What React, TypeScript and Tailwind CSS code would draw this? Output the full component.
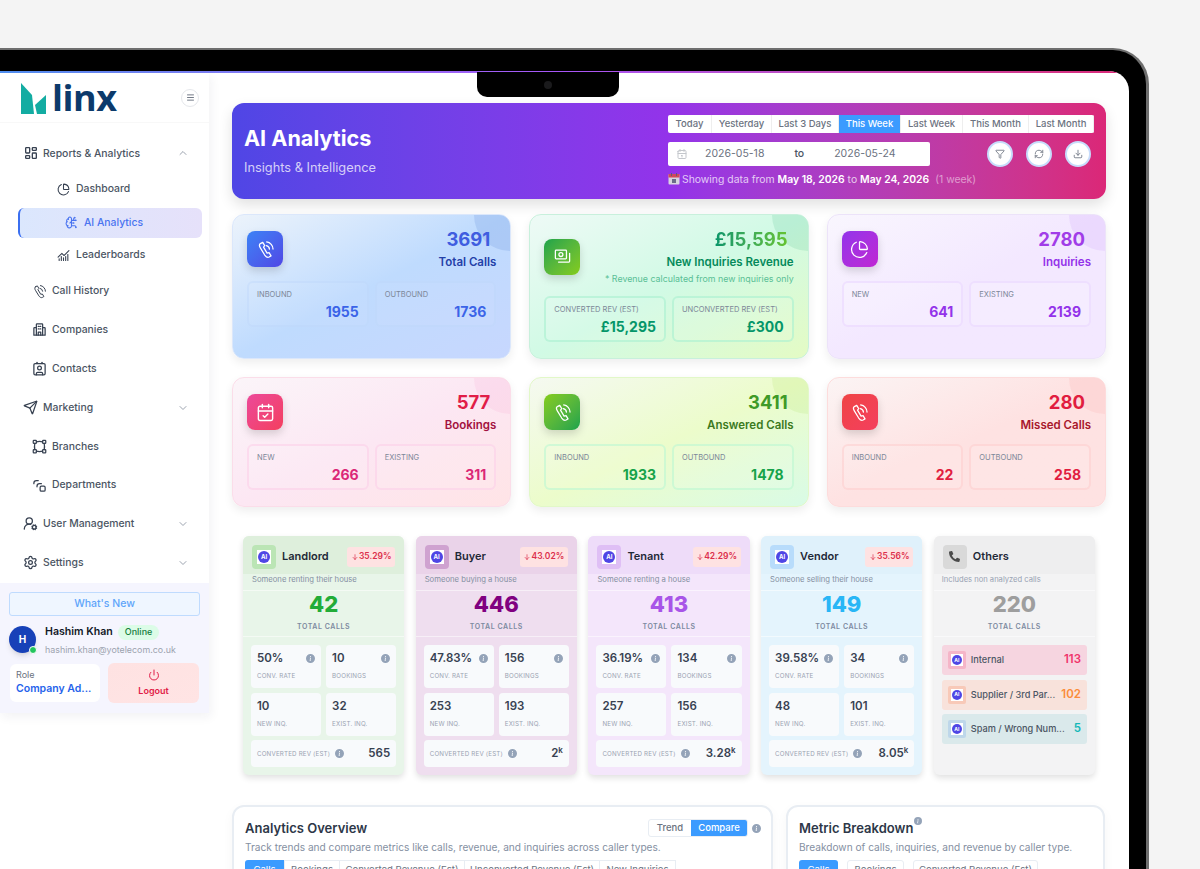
import {
  BrainCircuit,
  CalendarCheck,
  ChartNoAxesCombined,
  ChartPie,
  ChevronDown,
  ChevronUp,
  Contact,
  Download,
  Funnel,
  Menu,
  Power,
  RefreshCw,
  Send,
  Settings,
  UserRoundCog,
  VectorSquare,
} from "lucide-react";
import { BsInfoCircleFill } from "react-icons/bs";
import { FaPhoneAlt } from "react-icons/fa";
import { TbArrowDown, TbCalendar, TbLayoutDashboard } from "react-icons/tb";

const PhoneWaves = ({ className }: { className: string }) => (
  <svg viewBox="0 0 24 24" className={className} fill="none" stroke="currentColor" strokeWidth="1.6" strokeLinecap="round" strokeLinejoin="round">
    <path d="M5.5 4.5 L8.5 3 L11 7 L9.5 9 L14 16.5 L16.5 16 L19 20 L16.5 21.5 C14.5 22.5 12.5 21 11 19 L5.5 10 C4.3 8 4 5.5 5.5 4.5 Z" />
    <path d="M13.5 2.5 a9 9 0 0 1 8 9" />
    <path d="M13 7 a5 5 0 0 1 4 4.5" />
  </svg>
);

const CashIcon = ({ className }: { className: string }) => (
  <svg viewBox="0 0 24 24" className={className} fill="none" stroke="currentColor" strokeWidth="1.6" strokeLinecap="round" strokeLinejoin="round">
    <rect x="3" y="4" width="14" height="11" rx="1" />
    <circle cx="10" cy="9.5" r="2.5" />
    <path d="M7 19 h13 a1 1 0 0 0 1 -1 V8" />
  </svg>
);

const CompaniesIcon = ({ className }: { className: string }) => (
  <svg viewBox="0 0 24 24" className={className} fill="none" stroke="currentColor" strokeWidth="2" strokeLinecap="round" strokeLinejoin="round">
    <rect x="7" y="3" width="10" height="18" rx="1" />
    <path d="M7 9H4a1 1 0 0 0 -1 1v11h4 M17 9h3a1 1 0 0 1 1 1v11h-4" />
    <path d="M10 7h1 M13 7h1 M10 11h1 M13 11h1 M10 21v-5h4v5" />
  </svg>
);

const DepartmentsIcon = ({ className }: { className: string }) => (
  <svg viewBox="0 0 24 24" className={className} fill="none" stroke="currentColor" strokeWidth="2" strokeLinecap="round" strokeLinejoin="round">
    <path d="M10 4H7a4 4 0 0 0 -4 4v1" />
    <path d="M15 9h-3a4 4 0 0 0 -4 4v1" />
    <rect x="13" y="13" width="8" height="8" rx="2" />
  </svg>
);

const navIcon = "h-[15px] w-[15px] shrink-0";

const NavRow = ({ icon, label, indent, chevron }: { icon: React.ReactNode; label: string; indent: string; chevron?: "up" | "down" }) => (
  <div className={`flex h-[38.8px] items-center text-[10.4px] font-medium text-[#4b5563] ${indent}`}>
    <span className="mr-[6px] flex w-[13px] justify-center text-[#374151]">{icon}</span>
    <span>{label}</span>
    {chevron === "up" && <ChevronUp className="ml-auto mr-[20px] h-[12px] w-[12px] text-[#9ca3af]" />}
    {chevron === "down" && <ChevronDown className="ml-auto mr-[20px] h-[12px] w-[12px] text-[#9ca3af]" />}
  </div>
);

const Sidebar = () => (
  <aside className="w-[209px] shrink-0 self-start bg-white shadow-[2px_4px_10px_rgba(30,30,60,0.06)]">
    <div className="flex h-[50px] items-center justify-between border-b border-[#f8f8f8] pl-[21px] pr-[10px]">
      <div className="flex items-center">
        <svg width="26" height="31" viewBox="0 0 26 31" className="mt-[1px]">
          <path d="M0 0 L11 12 L13 31 L0 31 Z" fill="#13aca2" />
          <path d="M25 12 L25 31 L16 31 L14 22 Z" fill="#13aca2" />
        </svg>
        <span className="ml-[5px] font-['Open_Sans'] text-[36px] font-bold leading-[50px] tracking-[-0.5px] text-[#0c3a6b]">linx</span>
      </div>
      <div className="flex h-[18px] w-[18px] items-center justify-center rounded-full border border-[#e5e7eb] text-[#6b7280]">
        <Menu className="h-[9px] w-[9px]" strokeWidth={2.5} />
      </div>
    </div>
    <nav className="pb-[1px] pt-[11px]">
      <NavRow icon={<TbLayoutDashboard className="h-[16px] w-[16px] shrink-0" />} label="Reports & Analytics" indent="pl-[24px]" chevron="up" />
      <div className="flex h-[33px] items-center pl-[57px] text-[10.4px] font-medium text-[#4b5563]">
        <ChartPie className="mr-[6px] h-[13px] w-[13px] text-[#374151]" />
        Dashboard
      </div>
      <div className="ml-[18px] mr-[7px] mt-[2px] flex h-[30px] items-center rounded-[6px] border-l-2 border-[#3b6ff0] bg-gradient-to-r from-[#dbe7fd] to-[#e6e1fa] pl-[45px] text-[10.4px] font-medium text-[#4a74f0]">
        <BrainCircuit className="mr-[6px] h-[13px] w-[13px]" />
        AI Analytics
      </div>
      <div className="mb-[-1px] flex h-[35px] items-center pl-[57px] text-[10.4px] font-medium text-[#4b5563]">
        <ChartNoAxesCombined className="mr-[6px] h-[13px] w-[13px] text-[#374151]" />
        Leaderboards
      </div>
      <NavRow icon={<PhoneWaves className={navIcon} />} label="Call History" indent="pl-[33px]" />
      <NavRow icon={<CompaniesIcon className={navIcon} />} label="Companies" indent="pl-[33px]" />
      <NavRow icon={<Contact className={navIcon} />} label="Contacts" indent="pl-[33px]" />
      <NavRow icon={<Send className={navIcon} />} label="Marketing" indent="pl-[24px]" chevron="down" />
      <NavRow icon={<VectorSquare className={navIcon} />} label="Branches" indent="pl-[33px]" />
      <NavRow icon={<DepartmentsIcon className={navIcon} />} label="Departments" indent="pl-[33px]" />
      <NavRow icon={<UserRoundCog className={navIcon} />} label="User Management" indent="pl-[24px]" chevron="down" />
      <NavRow icon={<Settings className={navIcon} />} label="Settings" indent="pl-[24px]" chevron="down" />
    </nav>
    <div className="h-[130px] bg-[#f5f5fe] px-[9px] pt-[9px]">
      <div className="flex h-[24px] items-center justify-center rounded-[3px] border border-[#bfdbfe] bg-[#eff6ff] text-[10.5px] font-medium text-[#60a5fa]">
        What's New
      </div>
      <div className="mt-[10px] flex">
        <div className="relative flex h-[27px] w-[27px] shrink-0 items-center justify-center rounded-full bg-[#1741b8] text-[10px] font-bold text-white shadow-md">
          H
          <span className="absolute bottom-[-1px] right-[-1px] h-[8px] w-[8px] rounded-full border border-white bg-[#22c55e]" />
        </div>
        <div className="-mt-[2px] ml-[9px]">
          <div className="flex items-center">
            <span className="text-[10.6px] font-semibold text-[#111827]">Hashim Khan</span>
            <span className="ml-[5px] flex h-[15px] items-center rounded-full bg-[#dcfce7] px-[7px] text-[9px] font-medium text-[#15803d]">Online</span>
          </div>
          <div className="mt-[3px] text-[8.9px] text-[#9ca3af]">hashim.khan@yotelecom.co.uk</div>
        </div>
      </div>
      <div className="mt-[7px] flex items-center gap-[8px]">
        <div className="ml-[1px] h-[38px] w-[90px] rounded-[6px] bg-white px-[6px] pt-[5px]">
          <div className="text-[9px] leading-[12px] text-[#6b7280]">Role</div>
          <div className="whitespace-nowrap text-[10.5px] font-semibold leading-[15px] text-[#2563eb]">Company Ad...</div>
        </div>
        <div className="flex h-[40px] w-[91px] flex-col items-center justify-center rounded-[6px] bg-gradient-to-br from-[#fee2e2] to-[#ffe4e4] text-[9px] font-semibold text-[#e11d48]">
          <Power className="mb-[3px] h-[12px] w-[12px]" />
          Logout
        </div>
      </div>
    </div>
  </aside>
);

const rangeTabs = [
  { label: "Today", w: "w-[44px]" },
  { label: "Yesterday", w: "w-[60px]" },
  { label: "Last 3 Days", w: "w-[67px]" },
  { label: "This Week", w: "w-[62px]" },
  { label: "Last Week", w: "w-[62px]" },
  { label: "This Month", w: "w-[66px]" },
  { label: "Last Month", w: "w-[65px]" },
];

const CalendarEmoji = () => (
  <svg width="12" height="12" viewBox="0 0 12 12" className="mr-[2px] inline-block align-[-2px]">
    <rect x="0.5" y="1" width="11" height="10.5" rx="1" fill="#d8d4e0" />
    <rect x="0.5" y="1" width="11" height="3.5" fill="#d1495b" />
    <rect x="3" y="0" width="1" height="3" fill="#5d5d7a" />
    <rect x="8" y="0" width="1" height="3" fill="#5d5d7a" />
    <rect x="4" y="6" width="4" height="4" fill="#6b6b8a" />
  </svg>
);

const Hero = () => (
  <div className="flex h-[96px] justify-between rounded-[12px] bg-gradient-to-r from-[#4f46e5] via-[#9333ea] to-[#db2777] px-[12px] shadow-[0_6px_14px_rgba(0,0,0,0.12)]">
    <div className="pt-[21px]">
      <h1 className="text-[21.6px] font-bold leading-[28px] text-white">AI Analytics</h1>
      <p className="mt-[8px] text-[12.8px] leading-[16px] text-white/75">Insights &amp; Intelligence</p>
    </div>
    <div className="w-[426px] pt-[12px]">
      <div className="flex h-[18px] overflow-hidden rounded-[2px] bg-white">
        {rangeTabs.map((t) => (
          <div
            key={t.label}
            className={`flex items-center justify-center border-r border-[#eeeeee] text-[9.5px] font-medium ${t.w} ${
              t.label === "This Week" ? "bg-[#3b9bff] text-white" : "text-[#6b7280]"
            }`}
          >
            {t.label}
          </div>
        ))}
      </div>
      <div className="mt-[9px] flex h-[24px] items-center justify-between pr-[3px]">
        <div className="flex h-[24px] w-[262px] items-center rounded-[2px] bg-white pl-[8px] text-[10.5px] text-[#6b7280]">
          <TbCalendar className="h-[12px] w-[12px] text-[#c4c7cc]" />
          <span className="ml-[17px]">2026-05-18</span>
          <span className="ml-[30px] font-medium text-[#4b5563]">to</span>
          <span className="ml-[30px]">2026-05-24</span>
        </div>
        <div className="flex gap-[13px]">
          {[Funnel, RefreshCw, Download].map((Icon, i) => (
            <div key={i} className="flex h-[26px] w-[26px] items-center justify-center rounded-full border-2 border-[#c7dcfb] bg-white text-[#6b7280]">
              <Icon className="h-[10px] w-[10px]" />
            </div>
          ))}
        </div>
      </div>
      <div className="mt-[7px] whitespace-nowrap text-[10.4px] leading-[12px] text-white/75">
        <CalendarEmoji />
        Showing data from <b className="font-semibold text-white">May 18, 2026</b> to <b className="font-semibold text-white">May 24, 2026</b>
        <span className="ml-[6px] text-white/50">(1 week)</span>
      </div>
    </div>
  </div>
);

type Stat = {
  icon: React.ReactNode;
  value: string;
  label: string;
  note?: string;
  a: string;
  b: string;
  aVal: string;
  bVal: string;
  bg: string;
  iconBg: string;
  valueClass: string;
  labelClass: string;
  subClass: string;
  subValue: string;
  corner: string;
};

const statIcon = "h-[19px] w-[19px] text-white";

const stats: Stat[] = [
  {
    icon: <PhoneWaves className={statIcon} />,
    value: "3691",
    label: "Total Calls",
    a: "INBOUND",
    b: "OUTBOUND",
    aVal: "1955",
    bVal: "1736",
    bg: "bg-gradient-to-br from-[#ecf3fb] via-[#bfdbfe] to-[#c7d7fe] border-[#dbe7fb]",
    iconBg: "bg-gradient-to-br from-[#3b82f6] to-[#4f46e5]",
    valueClass: "text-[#3f5de0]",
    labelClass: "text-[#2440a8]",
    subClass: "border-[#bcd4fb]/40 bg-white/5",
    subValue: "text-[#3b64e8]",
    corner: "bg-[#6f97e0]/25",
  },
  {
    icon: <CashIcon className={statIcon} />,
    value: "£15,595",
    label: "New Inquiries Revenue",
    note: "* Revenue calculated from new inquiries only",
    a: "CONVERTED REV (EST)",
    b: "UNCONVERTED REV (EST)",
    aVal: "£15,295",
    bVal: "£300",
    bg: "bg-gradient-to-br from-[#eefaf6] via-[#d1fae5] to-[#e4fbc4] border-[#c8f0dc]",
    iconBg: "bg-gradient-to-br from-[#16a34a] to-[#84cc16]",
    valueClass: "bg-gradient-to-r from-[#059669] to-[#65c32e] bg-clip-text text-transparent",
    labelClass: "text-[#058a5b]",
    subClass: "border-[#a7f0cf]/60 bg-white/10",
    subValue: "text-[#059669]",
    corner: "bg-[#34b377]/15",
  },
  {
    icon: <ChartPie className={statIcon} strokeWidth={1.6} />,
    value: "2780",
    label: "Inquiries",
    a: "NEW",
    b: "EXISTING",
    aVal: "641",
    bVal: "2139",
    bg: "bg-gradient-to-br from-[#f9f6fe] via-[#f3e8ff] to-[#f3e8ff] border-[#ece3f9]",
    iconBg: "bg-gradient-to-br from-[#9333ea] to-[#c026d3]",
    valueClass: "text-[#a13de8]",
    labelClass: "text-[#9333ea]",
    subClass: "border-[#e9d5ff]/60 bg-white/20",
    subValue: "text-[#9333ea]",
    corner: "bg-[#a855f7]/10",
  },
  {
    icon: <CalendarCheck className={statIcon} strokeWidth={1.8} />,
    value: "577",
    label: "Bookings",
    a: "NEW",
    b: "EXISTING",
    aVal: "266",
    bVal: "311",
    bg: "bg-gradient-to-br from-[#fbf5f9] via-[#fce7f3] to-[#ffe4e6] border-[#fbdde9]",
    iconBg: "bg-gradient-to-br from-[#ec4899] to-[#f43f5e]",
    valueClass: "text-[#e11d48]",
    labelClass: "text-[#a3123f]",
    subClass: "border-[#fbcfe8]/60 bg-white/10",
    subValue: "text-[#db2777]",
    corner: "bg-[#f472b6]/10",
  },
  {
    icon: <PhoneWaves className={statIcon} />,
    value: "3411",
    label: "Answered Calls",
    a: "INBOUND",
    b: "OUTBOUND",
    aVal: "1933",
    bVal: "1478",
    bg: "bg-gradient-to-br from-[#f5f9f1] via-[#ecfccb] to-[#d9fbe6] border-[#e2f8c8]",
    iconBg: "bg-gradient-to-br from-[#84cc16] to-[#16a34a]",
    valueClass: "text-[#3f9a28]",
    labelClass: "text-[#3c7a1e]",
    subClass: "border-[#bbf7d0]/60 bg-white/10",
    subValue: "text-[#16a34a]",
    corner: "bg-[#84cc16]/10",
  },
  {
    icon: <PhoneWaves className={statIcon} />,
    value: "280",
    label: "Missed Calls",
    a: "INBOUND",
    b: "OUTBOUND",
    aVal: "22",
    bVal: "258",
    bg: "bg-gradient-to-br from-[#fbf4f4] via-[#fee2e2] to-[#fee2e2] border-[#fddcdc]",
    iconBg: "bg-gradient-to-br from-[#ef4444] to-[#f43f5e]",
    valueClass: "text-[#e11d3f]",
    labelClass: "text-[#a8182c]",
    subClass: "border-[#fecaca]/50 bg-white/10",
    subValue: "text-[#e11d3f]",
    corner: "bg-[#f87171]/10",
  },
];

const StatCard = ({ s }: { s: Stat }) => (
  <div className={`relative overflow-hidden rounded-[12px] border px-[14px] pb-[16px] pt-[11px] shadow-[0_4px_10px_rgba(0,0,0,0.07)] ${s.bg}`}>
    <div className={`absolute right-0 top-0 h-[36px] w-[36px] rounded-bl-full ${s.corner}`} />
    <div className="relative flex items-center justify-between">
      <div className={`flex h-[36px] w-[36px] items-center justify-center rounded-[8px] shadow-[0_4px_8px_rgba(0,0,0,0.15)] ${s.iconBg}`}>{s.icon}</div>
      <div className="pb-[1px] text-right">
        <div className="pr-[6px] text-[18.5px] font-bold leading-[26px]">
          <span className={s.valueClass}>{s.value}</span>
        </div>
        <div className={`mt-[1px] text-[11.5px] font-semibold leading-[18px] ${s.labelClass}`}>{s.label}</div>
        {s.note && <div className="text-[8.85px] leading-[15px] text-[#5abf96]">{s.note}</div>}
      </div>
    </div>
    <div className="relative mt-[9px] grid grid-cols-2 gap-[6px]">
      {[
        [s.a, s.aVal],
        [s.b, s.bVal],
      ].map(([name, val]) => (
        <div key={name} className={`h-[46px] rounded-[6px] border-2 px-[8px] pt-[6px] ${s.subClass}`}>
          <div className="whitespace-nowrap text-[7.5px] leading-[11px] text-[#7c8798]">{name}</div>
          <div className={`mt-[3px] text-right text-[14px] font-bold leading-[18px] ${s.subValue}`}>{val}</div>
        </div>
      ))}
    </div>
  </div>
);

const AiLogo = ({ box, tiny }: { box: string; tiny?: boolean }) => (
  <div className={`flex items-center justify-center ${tiny ? "h-[18px] w-[18px] rounded-[2px]" : "h-[24px] w-[24px] rounded-[4px]"} ${box}`}>
    <div className={`flex items-center justify-center bg-white ${tiny ? "h-[12px] w-[12px]" : "h-[14px] w-[14px]"}`}>
      <div className={`flex items-center justify-center rounded-full bg-[#4f46e5] font-bold leading-none text-white ${tiny ? "h-[10px] w-[10px] text-[5px]" : "h-[12px] w-[12px] text-[6px]"}`}>AI</div>
    </div>
  </div>
);

const Info = ({ className }: { className: string }) => <BsInfoCircleFill className={`shrink-0 text-[#94a3b8] ${className}`} />;

const Tile = ({ value, label, info }: { value: string; label: string; info?: boolean }) => (
  <div className="h-[43px] rounded-[4px] bg-[#f8fafc] px-[6px] pt-[6px]">
    <div className="flex items-center justify-between">
      <span className="text-[11.5px] font-semibold leading-[14px] text-[#374151]">{value}</span>
      {info && <Info className="h-[9px] w-[9px]" />}
    </div>
    <div className="mt-[6px] text-[6.2px] leading-[10px] tracking-[0.03em] text-[#9aa3b2]">{label}</div>
  </div>
);

type Caller = {
  name: string;
  pct: string;
  sub: string;
  total: string;
  card: string;
  head: string;
  box: string;
  num: string;
  rate: string;
  book: string;
  newInq: string;
  exist: string;
  rev: string;
  k?: boolean;
};

const callers: Caller[] = [
  { name: "Landlord", pct: "35.29%", sub: "Someone renting their house", total: "42", card: "bg-[#e8f5e9]", head: "bg-[#deefdc]", box: "bg-[#bbe5b5]", num: "text-[#22ac38]", rate: "50%", book: "10", newInq: "10", exist: "32", rev: "565" },
  { name: "Buyer", pct: "43.02%", sub: "Someone buying a house", total: "446", card: "bg-[#efdeef]", head: "bg-[#ead3e9]", box: "bg-[#cfa2d0]", num: "text-[#800080]", rate: "47.83%", book: "156", newInq: "253", exist: "193", rev: "2", k: true },
  { name: "Tenant", pct: "42.29%", sub: "Someone renting a house", total: "413", card: "bg-[#f4e6fb]", head: "bg-[#eedcf9]", box: "bg-[#dfbff5]", num: "text-[#a855e8]", rate: "36.19%", book: "134", newInq: "257", exist: "156", rev: "3.28", k: true },
  { name: "Vendor", pct: "35.56%", sub: "Someone selling their house", total: "149", card: "bg-[#e4f4fd]", head: "bg-[#dff1fb]", box: "bg-[#b8dcfb]", num: "text-[#29b6f6]", rate: "39.58%", book: "34", newInq: "48", exist: "101", rev: "8.05", k: true },
];

const TotalBlock = ({ value, num }: { value: string; num: string }) => (
  <div className="flex h-[47px] flex-col items-center border-y border-white/50">
    <div className={`text-[22px] font-extrabold leading-[26px] ${num}`}>{value}</div>
    <div className="mt-[4px] text-[7px] font-semibold leading-[12px] tracking-[0.08em] text-[#7d8aa0]">TOTAL CALLS</div>
  </div>
);

const CallerCard = ({ c }: { c: Caller }) => (
  <div className={`h-[239px] overflow-hidden rounded-[6px] shadow-[0_3px_6px_rgba(0,0,0,0.12)] ${c.card}`}>
    <div className={`flex h-[38px] items-center pl-[9px] pr-[9px] pt-[3px] ${c.head}`}>
      <AiLogo box={c.box} />
      <span className="ml-[6px] text-[11px] font-semibold text-[#1f2937]">{c.name}</span>
      <span className="ml-auto flex h-[20px] w-[48px] items-center justify-center rounded-[3px] bg-[#fee2e2] text-[8.5px] font-semibold text-[#dc2f4b]">
        <TbArrowDown className="h-[8px] w-[8px]" />
        {c.pct}
      </span>
    </div>
    <div className="h-[16px] pl-[9px] text-[7.7px] leading-[11px] text-[#8590a2]">{c.sub}</div>
    <TotalBlock value={c.total} num={c.num} />
    <div className="px-[8px] pt-[8px]">
      <div className="grid grid-cols-2 gap-[5px]">
        <Tile value={c.rate} label="CONV. RATE" info />
        <Tile value={c.book} label="BOOKINGS" info />
        <Tile value={c.newInq} label="NEW INQ." />
        <Tile value={c.exist} label="EXIST. INQ." />
      </div>
      <div className="mt-[4px] flex h-[27px] items-center rounded-[4px] bg-[#f8fafc] px-[6px]">
        <span className="text-[6.2px] tracking-[0.03em] text-[#9aa3b2]">CONVERTED REV (EST)</span>
        <Info className="ml-[5px] h-[9px] w-[9px]" />
        <span className="ml-auto text-[11.5px] font-semibold text-[#374151]">
          {c.rev}
          {c.k && <sup className="text-[8px] font-semibold">k</sup>}
        </span>
      </div>
    </div>
  </div>
);

const otherRows = [
  { name: "Internal", value: "113", bg: "bg-[#f6d5e0]", box: "bg-[#f5b5c8]", val: "text-[#f0336b]" },
  { name: "Supplier / 3rd Par...", value: "102", bg: "bg-[#f8e2db]", box: "bg-[#f8c9b8]", val: "text-[#fb8c3a]" },
  { name: "Spam / Wrong Num...", value: "5", bg: "bg-[#dae9eb]", box: "bg-[#bed7ea]", val: "text-[#14b8b8]" },
];

const OthersCard = () => (
  <div className="h-[239px] overflow-hidden rounded-[6px] bg-[#f3f3f4] shadow-[0_3px_6px_rgba(0,0,0,0.12)]">
    <div className="flex h-[38px] items-center bg-[#eeeeef] pl-[9px] pt-[3px]">
      <div className="flex h-[24px] w-[24px] items-center justify-center rounded-[4px] bg-[#d9d9d9]">
        <FaPhoneAlt className="h-[11px] w-[11px] text-[#4b4b4b]" />
      </div>
      <span className="ml-[6px] text-[11px] font-semibold text-[#1f2937]">Others</span>
    </div>
    <div className="h-[16px] pl-[8px] text-[7.6px] leading-[11px] text-[#98a2b3]">Includes non analyzed calls</div>
    <TotalBlock value="220" num="text-[#9e9e9e]" />
    <div className="flex flex-col gap-[4.5px] px-[8px] pt-[8px]">
      {otherRows.map((r) => (
        <div key={r.name} className={`flex h-[30px] items-center rounded-[3px] px-[6px] ${r.bg}`}>
          <AiLogo box={r.box} tiny />
          <span className="ml-[5px] whitespace-nowrap text-[9.2px] font-medium text-[#4b5563]">{r.name}</span>
          <span className={`ml-auto text-[11.5px] font-semibold ${r.val}`}>{r.value}</span>
        </div>
      ))}
    </div>
  </div>
);

const Panel = ({ className, children }: { className: string; children: React.ReactNode }) => (
  <div className={`h-[90px] rounded-[12px] border-2 border-[#e8edf3] bg-white px-[11px] pt-[11px] shadow-[0_4px_12px_rgba(0,0,0,0.04)] ${className}`}>{children}</div>
);

const Bottom = () => (
  <div className="mt-[30px] flex gap-[13px]">
    <Panel className="w-[541px]">
      <div className="flex items-start justify-between">
        <h2 className="text-[13px] font-semibold leading-[20px] text-[#2d3748]">Analytics Overview</h2>
        <div className="mr-[-1px] mt-[1px] flex items-center">
          <div className="flex h-[18px] overflow-hidden rounded-[3px] border border-[#e8edf3] text-[9.5px] font-medium">
            <span className="flex w-[42px] items-center justify-center text-[#6b7280]">Trend</span>
            <span className="flex w-[56px] items-center justify-center bg-[#3b9bff] text-white">Compare</span>
          </div>
          <Info className="ml-[4px] h-[9px] w-[9px]" />
        </div>
      </div>
      <p className="mt-[1px] text-[10.15px] leading-[16px] text-[#8590a2]">Track trends and compare metrics like calls, revenue, and inquiries across caller types.</p>
      <div className="mt-[5px] flex h-[20px] text-[9.6px] text-[#6b7280]">
        <span className="flex w-[39px] items-center justify-center rounded-l-[3px] bg-[#3b9bff] text-white">Calls</span>
        <span className="flex w-[56px] items-center justify-center border border-[#e8edf3]">Bookings</span>
        <span className="flex w-[125px] items-center justify-center border border-l-0 border-[#e8edf3]">Converted Revenue (Est)</span>
        <span className="flex w-[135px] items-center justify-center border border-l-0 border-[#e8edf3]">Unconverted Revenue (Est)</span>
        <span className="flex w-[76px] items-center justify-center border border-l-0 border-[#e8edf3]">New Inquiries</span>
      </div>
    </Panel>
    <Panel className="w-[319px]">
      <div className="flex items-start">
        <h2 className="text-[13px] font-semibold leading-[20px] text-[#2d3748]">Metric Breakdown</h2>
        <Info className="ml-[1px] mt-[-1px] h-[8px] w-[8px]" />
      </div>
      <p className="mt-[1px] text-[10.15px] leading-[16px] text-[#8590a2]">Breakdown of calls, inquiries, and revenue by caller type.</p>
      <div className="mt-[5px] flex h-[20px] gap-[9px] text-[9.6px] text-[#6b7280]">
        <span className="flex w-[39px] items-center justify-center rounded-[3px] bg-[#3b9bff] text-white">Calls</span>
        <span className="flex w-[57px] items-center justify-center rounded-[3px] border border-[#e8edf3]">Bookings</span>
        <span className="flex w-[125px] items-center justify-center rounded-[3px] border border-[#e8edf3]">Converted Revenue (Est)</span>
      </div>
    </Panel>
  </div>
);

export default function App() {
  return (
    <div className="h-[869px] w-[1200px] overflow-hidden bg-[#f4f4f4] pr-[51px] pt-[48px] font-['Inter',sans-serif]">
      <div className="relative h-[900px] rounded-tr-[36px] border-r-[3px] border-t-[2px] border-[#6e6e6e] bg-black pr-[17px] pt-[21px]">
        <div className="absolute left-[477px] top-[22px] z-10 flex h-[25px] w-[142px] items-center justify-center rounded-b-[10px] bg-black">
          <span className="h-[8px] w-[8px] rounded-full bg-[#1a1a1c]" />
        </div>
        <div className="h-full overflow-hidden rounded-tr-[20px] bg-white">
          <div className="h-[2px] bg-gradient-to-r from-[#4f8ff0] via-[#a855f7] to-[#db2777]" />
          <div className="flex">
            <Sidebar />
            <main className="min-w-0 flex-1 pl-[23px] pr-[23px] pt-[30px]">
              <Hero />
              <section className="mt-[15px] grid grid-cols-3 gap-[18px]">
                {stats.map((s) => (
                  <StatCard key={s.label} s={s} />
                ))}
              </section>
              <section className="mt-[29px] grid grid-cols-5 gap-[11.5px] px-[11px]">
                {callers.map((c) => (
                  <CallerCard key={c.name} c={c} />
                ))}
                <OthersCard />
              </section>
              <Bottom />
            </main>
          </div>
        </div>
      </div>
    </div>
  );
}
